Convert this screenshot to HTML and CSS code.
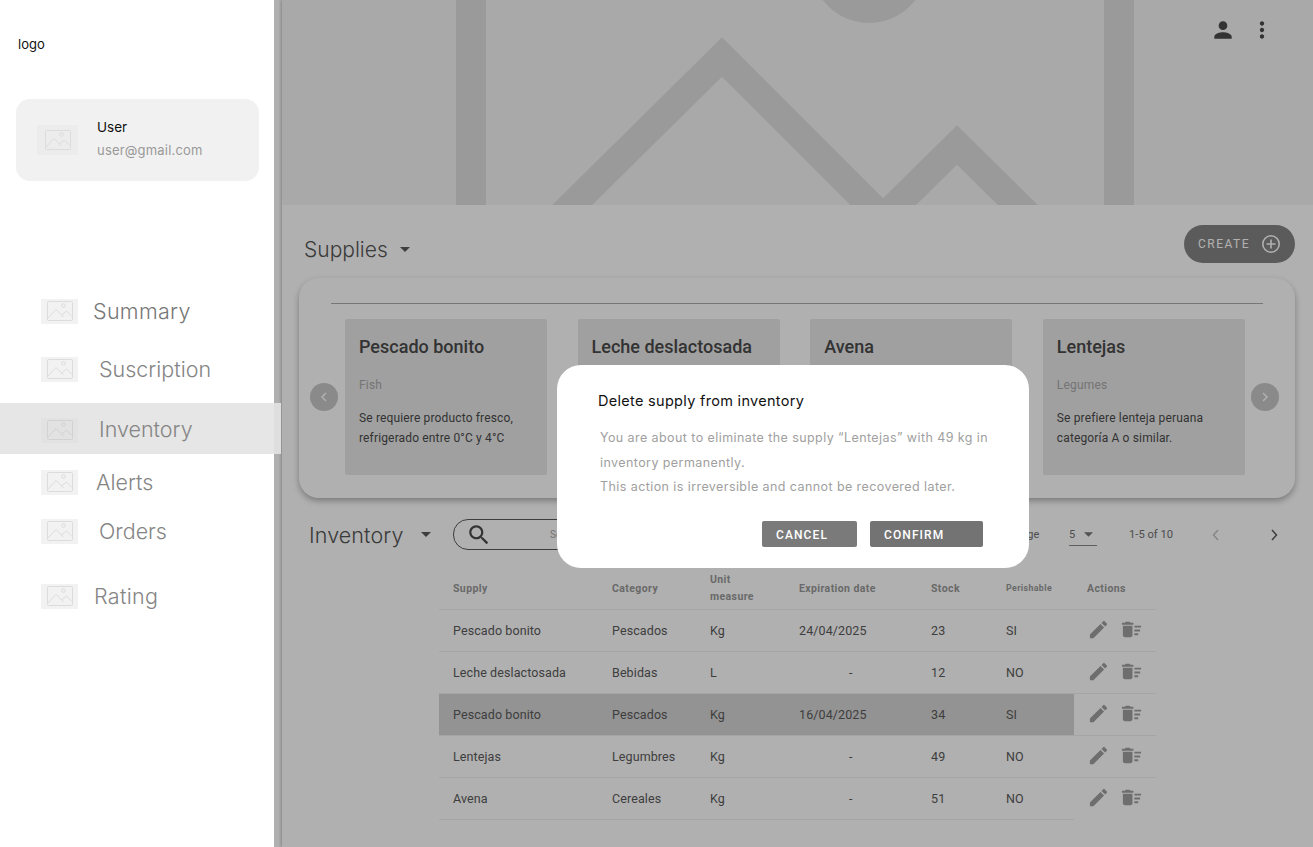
FILE: index.html
```html
<!DOCTYPE html>
<html lang="en">
<head>
  <meta charset="UTF-8" />
  <meta name="viewport" content="width=device-width, initial-scale=1.0" />
  <title>Inventory</title>
  <link rel="stylesheet" href="styles.css">
</head>
<body>
  <svg class="sprites" width="0" height="0">
    <symbol id="i-image" viewBox="0 0 28 22">
      <rect x="1.5" y="1.5" width="25" height="19" rx="1" fill="none" stroke="currentColor" stroke-width="1"/>
      <circle cx="17.5" cy="5.5" r="1.8" fill="none" stroke="currentColor" stroke-width="1"/>
      <path d="M2 18 L10 9.5 L17.5 17 M15.5 15 L20.5 11 L26 16.5" fill="none" stroke="currentColor" stroke-width="1"/>
    </symbol>
    <symbol id="i-edit" viewBox="0 0 24 24">
      <path d="M3 17.25V21h3.75L17.81 9.94l-3.75-3.75L3 17.25zM20.71 7.04c.39-.39.39-1.02 0-1.41l-2.34-2.34c-.39-.39-1.02-.39-1.41 0l-1.83 1.83 3.75 3.75 1.83-1.83z"/>
    </symbol>
    <symbol id="i-sweep" viewBox="0 0 24 24">
      <path d="M15 16h4v2h-4zm0-8h7v2h-7zm0 4h6v2h-6zM3 18c0 1.1.9 2 2 2h6c1.1 0 2-.9 2-2V8H3v10zM14 5h-3l-1-1H6L5 5H2v2h12z"/>
    </symbol>
    <symbol id="i-caret" viewBox="0 0 10 5">
      <path d="M0 0h10L5 5z"/>
    </symbol>
  </svg>

  <div class="app">
    <aside class="sidebar">
      <div class="logo">logo</div>
      <div class="user-card">
        <span class="thumb thumb-user"><svg class="thumb-icon"><use href="#i-image"/></svg></span>
        <div class="user-text">
          <div class="user-name">User</div>
          <div class="user-mail">user@gmail.com</div>
        </div>
      </div>
      <nav class="nav">
        <a class="nav-item nav-summary"><span class="thumb"><svg class="thumb-icon"><use href="#i-image"/></svg></span><span class="nav-label">Summary</span></a>
        <a class="nav-item nav-suscription"><span class="thumb"><svg class="thumb-icon"><use href="#i-image"/></svg></span><span class="nav-label">Suscription</span></a>
        <a class="nav-item nav-inventory"><span class="thumb"><svg class="thumb-icon"><use href="#i-image"/></svg></span><span class="nav-label">Inventory</span></a>
        <a class="nav-item nav-alerts"><span class="thumb"><svg class="thumb-icon"><use href="#i-image"/></svg></span><span class="nav-label">Alerts</span></a>
        <a class="nav-item nav-orders"><span class="thumb"><svg class="thumb-icon"><use href="#i-image"/></svg></span><span class="nav-label">Orders</span></a>
        <a class="nav-item nav-rating"><span class="thumb"><svg class="thumb-icon"><use href="#i-image"/></svg></span><span class="nav-label">Rating</span></a>
      </nav>
    </aside>

    <main class="main">
      <header class="hero">
        <svg class="hero-art" viewBox="0 0 1031 205" width="1031" height="205">
          <circle cx="587" cy="-35" r="58" fill="#dfdfdf"/>
          <path d="M189 -20V225M837 -20V225" stroke="#dfdfdf" stroke-width="30" fill="none"/>
          <path d="M268 227L440 57L601 218L675 145L758 227" stroke="#dfdfdf" stroke-width="28" fill="none"/>
        </svg>
        <div class="hero-actions">
          <svg class="hero-icon" viewBox="0 0 24 24"><path d="M12 12c2.21 0 4-1.79 4-4s-1.79-4-4-4-4 1.79-4 4 1.79 4 4 4zm0 2c-2.67 0-8 1.34-8 4v2h16v-2c0-2.66-5.33-4-8-4z"/></svg>
          <svg class="hero-icon" viewBox="0 0 24 24"><path d="M12 8c1.1 0 2-.9 2-2s-.9-2-2-2-2 .9-2 2 .9 2 2 2zm0 2c-1.1 0-2 .9-2 2s.9 2 2 2 2-.9 2-2-.9-2-2-2zm0 6c-1.1 0-2 .9-2 2s.9 2 2 2 2-.9 2-2-.9-2-2-2z"/></svg>
        </div>
      </header>

      <section class="supplies-head">
        <h2 class="section-title">Supplies</h2>
        <svg class="caret"><use href="#i-caret"/></svg>
        <button class="create-btn">CREATE
          <svg class="create-icon" viewBox="0 0 20 20"><circle cx="10" cy="10" r="8.2"/><path d="M10 5.5v9M5.5 10h9"/></svg>
        </button>
      </section>

      <section class="carousel">
        <div class="carousel-line"></div>
        <div class="carousel-row">
          <button class="arrow"><svg viewBox="0 0 10 14"><path d="M7 3L3 7l4 4"/></svg></button>
          <div class="cards">
            <article class="card">
              <h3>Pescado bonito</h3>
              <p class="card-cat">Fish</p>
              <p class="card-desc">Se requiere producto fresco, refrigerado entre 0°C y 4°C</p>
            </article>
            <article class="card">
              <h3>Leche deslactosada</h3>
            </article>
            <article class="card">
              <h3>Avena</h3>
            </article>
            <article class="card">
              <h3>Lentejas</h3>
              <p class="card-cat">Legumes</p>
              <p class="card-desc">Se prefiere lenteja peruana categoría A o similar.</p>
            </article>
          </div>
          <button class="arrow"><svg viewBox="0 0 10 14"><path d="M3 3l4 4-4 4"/></svg></button>
        </div>
      </section>

      <section class="inventory-bar">
        <div class="inventory-title">
          <h2 class="section-title">Inventory</h2>
          <svg class="caret"><use href="#i-caret"/></svg>
        </div>
        <div class="search">
          <svg class="search-icon" viewBox="0 0 24 24"><path d="M15.5 14h-.79l-.28-.27C15.41 12.59 16 11.11 16 9.5 16 5.91 13.09 3 9.5 3S3 5.91 3 9.5 5.91 16 9.5 16c1.61 0 3.09-.59 4.23-1.57l.27.28v.79l5 4.99L20.49 19l-4.99-5zm-6 0C7.01 14 5 11.99 5 9.5S7.01 5 9.5 5 14 7.01 14 9.5 11.99 14 9.5 14z"/></svg>
          <span class="search-text">Search</span>
        </div>
        <div class="pager">
          <span class="pager-label">Rows per page</span>
          <span class="pager-select">5<svg class="pager-caret"><use href="#i-caret"/></svg></span>
          <span class="pager-count">1-5 of 10</span>
          <svg class="pager-arrow pager-off" viewBox="0 0 10 14"><path d="M7 2L2.5 7 7 12"/></svg>
          <svg class="pager-arrow" viewBox="0 0 10 14"><path d="M3 2l4.5 5L3 12"/></svg>
        </div>
      </section>

      <table class="table">
        <colgroup>
          <col class="col-supply"><col class="col-cat"><col class="col-unit"><col class="col-exp"><col class="col-stock"><col class="col-per"><col class="col-act">
        </colgroup>
        <thead>
          <tr>
            <th>Supply</th>
            <th>Category</th>
            <th class="th-unit">Unit measure</th>
            <th>Expiration date</th>
            <th>Stock</th>
            <th class="th-small">Perishable</th>
            <th class="th-actions">Actions</th>
          </tr>
        </thead>
        <tbody>
          <tr>
            <td>Pescado bonito</td><td>Pescados</td><td>Kg</td><td>24/04/2025</td><td>23</td><td>SI</td>
            <td class="actions"><svg class="act-icon"><use href="#i-edit"/></svg><svg class="act-icon"><use href="#i-sweep"/></svg></td>
          </tr>
          <tr>
            <td>Leche deslactosada</td><td>Bebidas</td><td>L</td><td class="no-date">-</td><td>12</td><td>NO</td>
            <td class="actions"><svg class="act-icon"><use href="#i-edit"/></svg><svg class="act-icon"><use href="#i-sweep"/></svg></td>
          </tr>
          <tr class="selected">
            <td>Pescado bonito</td><td>Pescados</td><td>Kg</td><td>16/04/2025</td><td>34</td><td>SI</td>
            <td class="actions"><svg class="act-icon"><use href="#i-edit"/></svg><svg class="act-icon"><use href="#i-sweep"/></svg></td>
          </tr>
          <tr>
            <td>Lentejas</td><td>Legumbres</td><td>Kg</td><td class="no-date">-</td><td>49</td><td>NO</td>
            <td class="actions"><svg class="act-icon"><use href="#i-edit"/></svg><svg class="act-icon"><use href="#i-sweep"/></svg></td>
          </tr>
          <tr class="last">
            <td>Avena</td><td>Cereales</td><td>Kg</td><td class="no-date">-</td><td>51</td><td>NO</td>
            <td class="actions"><svg class="act-icon"><use href="#i-edit"/></svg><svg class="act-icon"><use href="#i-sweep"/></svg></td>
          </tr>
        </tbody>
      </table>
    </main>

    <div class="overlay">
      <div class="modal">
        <h4 class="modal-title">Delete supply from inventory</h4>
        <p class="modal-text">You are about to eliminate the supply “Lentejas” with 49 kg in inventory permanently.<br>This action is irreversible and cannot be recovered later.</p>
        <div class="modal-actions">
          <button class="modal-btn btn-cancel">CANCEL</button>
          <button class="modal-btn btn-confirm">CONFIRM</button>
        </div>
      </div>
    </div>
  </div>
</body>
</html>
```

FILE: styles.css
```css
* {
  box-sizing: border-box;
}
body {
  margin: 0;
  background: #fff;
  font-family: "Roboto", sans-serif;
  overflow: hidden;
}
h2, h3, h4, p {
  margin: 0;
  font-weight: normal;
}
button {
  border: none;
  font-family: inherit;
  padding: 0;
}
.sprites {
  display: block;
  height: 0;
}
.app {
  position: relative;
  display: flex;
  width: 1313px;
  height: 847px;
  overflow: hidden;
}

/* sidebar */
.sidebar {
  position: relative;
  z-index: 2;
  flex: 0 0 274px;
  width: 274px;
  min-width: 0;
  background: #fff;
  font-family: "Inter", sans-serif;
}
.logo {
  padding: 36px 0 0 18px;
  height: 99px;
  font-size: 13px;
  line-height: 16px;
  color: #111;
}
.user-card {
  display: flex;
  align-items: center;
  gap: 19px;
  margin-left: 16px;
  width: 243px;
  height: 82px;
  padding-left: 21px;
  background: #f1f1f1;
  border-radius: 14px;
}
.user-text {
  padding-bottom: 4px;
}
.user-name {
  font-size: 13.5px;
  line-height: 18px;
  color: #111;
}
.user-mail {
  margin-top: 5px;
  font-size: 13px;
  line-height: 18px;
  letter-spacing: 0.2px;
  color: #999;
}
.thumb {
  flex: 0 0 37px;
  width: 37px;
  height: 25px;
  display: flex;
  align-items: center;
  justify-content: center;
  background: #f2f2f2;
  color: #dcdcdc;
}
.thumb-user {
  flex-basis: 41px;
  width: 41px;
  height: 30px;
  background: #ececec;
}
.thumb-icon {
  width: 28px;
  height: 22px;
}
.nav {
  padding-top: 110px;
}
.nav-item {
  position: relative;
  display: flex;
  align-items: center;
  height: 40px;
  width: 274px;
  padding-left: 41px;
  font-size: 21.5px;
  font-weight: 300;
  color: #858585;
}
.nav-suscription { margin-top: 18px; }
.nav-suscription .nav-label { margin-left: 21px; }
.nav-summary .nav-label { margin-left: 15px; color: #777; letter-spacing: 0.3px; }
.nav-inventory {
  margin-top: 14px;
  height: 51px;
  width: 281px;
  background: #e6e6e6;
}
.nav-inventory::after {
  content: "";
  position: absolute;
  top: 0;
  right: 0;
  bottom: 0;
  width: 7px;
  background: #dedede;
}
.nav-inventory .thumb { margin-top: 3px; background: #e2e2e2; color: #d2d2d2; }
.nav-inventory .nav-label { margin-left: 21px; }
.nav-alerts { margin-top: 8px; }
.nav-alerts .nav-label { margin-left: 18px; }
.nav-orders { margin-top: 9px; }
.nav-orders .nav-label { margin-left: 21px; }
.nav-rating { margin-top: 25px; }
.nav-rating .nav-label { margin-left: 16px; letter-spacing: 0.3px; }

/* main area */
.main {
  flex: 1;
  margin-left: 8px;
  min-width: 0;
  background: #fff;
  box-shadow: -1px 0 3px rgba(0, 0, 0, 0.25);
}
.hero {
  position: relative;
  height: 205px;
  background: #f5f5f5;
  overflow: hidden;
}
.hero-art {
  position: absolute;
  top: 0;
  left: 0;
}
.hero-actions {
  position: absolute;
  top: 17px;
  right: 38px;
  display: flex;
  gap: 13px;
}
.hero-icon {
  width: 26px;
  height: 26px;
  fill: #4a4a4a;
}
.supplies-head {
  display: flex;
  align-items: center;
  height: 38px;
  margin-top: 20px;
  padding: 0 18px 0 22px;
}
.supplies-head .section-title,
.supplies-head .caret {
  margin-top: 10px;
}
.section-title {
  font-family: "Inter", sans-serif;
  font-size: 21px;
  font-weight: 300;
  color: #555;
}
.caret {
  width: 10px;
  height: 5px;
  margin-left: 12px;
  fill: #5a5a5a;
}
.create-btn {
  display: flex;
  align-items: center;
  justify-content: space-between;
  margin-left: auto;
  width: 111px;
  height: 38px;
  padding: 0 14px;
  border-radius: 19px;
  background: #858585;
  color: #fff;
  font-size: 12px;
  font-weight: 400;
  letter-spacing: 1.5px;
}
.create-icon {
  width: 20px;
  height: 20px;
  fill: none;
  stroke: #fff;
  stroke-width: 1.6;
}
.carousel {
  margin: 15px 18px 0 17px;
  height: 220px;
  padding-top: 25px;
  background: #fff;
  border-radius: 20px;
  box-shadow: 0 3px 6px rgba(0, 0, 0, 0.3);
}
.carousel-line {
  height: 1px;
  margin: 0 32px;
  background: #adadad;
}
.carousel-row {
  display: flex;
  align-items: center;
  gap: 7px;
  margin-top: 15px;
  padding-left: 11px;
}
.arrow {
  flex: 0 0 28px;
  width: 28px;
  height: 28px;
  display: flex;
  align-items: center;
  justify-content: center;
  border-radius: 50%;
  background: #c8c8c8;
}
.arrow svg {
  width: 10px;
  height: 14px;
  fill: none;
  stroke: #fff;
  stroke-width: 1.5;
}
.cards {
  display: flex;
  gap: 30.6px;
  margin-right: -1px;
}
.card {
  width: 202px;
  height: 156px;
  padding: 18px 14px 0;
  background: #e8e8e8;
  border-radius: 2px;
  color: #4a4a4a;
}
.card h3 {
  font-size: 18px;
  line-height: 20px;
  font-weight: 500;
}
.card-cat {
  margin-top: 20px;
  font-size: 12px;
  line-height: 16px;
  letter-spacing: 0.2px;
  color: #a8a8a8;
}
.card-desc {
  margin-top: 16px;
  font-size: 12px;
  line-height: 19.5px;
  letter-spacing: 0.15px;
}

/* inventory */
.inventory-bar {
  display: flex;
  align-items: center;
  height: 31px;
  margin-top: 21px;
  padding-left: 27px;
}
.inventory-title {
  display: flex;
  align-items: center;
  flex: 0 0 144px;
}
.inventory-title .section-title {
  font-size: 21.5px;
  letter-spacing: 0.1px;
}
.inventory-title .caret {
  margin-left: 17px;
}
.search {
  display: flex;
  align-items: center;
  width: 400px;
  height: 31px;
  padding-left: 12px;
  border: 1px solid #5a5a5a;
  border-radius: 15px;
}
.search-icon {
  width: 26px;
  height: 26px;
  fill: #4a4a4a;
}
.search-text {
  margin-left: 58px;
  font-size: 10px;
  color: #a8a8a8;
}
.pager {
  display: flex;
  align-items: center;
  margin-left: 114px;
  font-size: 11px;
  color: #707070;
}
.pager-label {
  width: 72px;
  white-space: nowrap;
  text-align: right;
}
.pager-select {
  display: flex;
  align-items: center;
  gap: 9px;
  width: 28px;
  height: 23px;
  margin-left: 30px;
  border-bottom: 1px solid #8a8a8a;
}
.pager-caret {
  width: 9px;
  height: 5px;
  fill: #777;
}
.pager-count {
  margin-left: 32px;
  width: 44px;
  white-space: nowrap;
  font-size: 11.2px;
}
.pager-arrow {
  width: 10px;
  height: 14px;
  fill: none;
  stroke: #5a5a5a;
  stroke-width: 1.5;
  margin-left: 38px;
}
.pager-arrow:last-child {
  margin-left: 48px;
}
.pager-off {
  stroke: #c4c4c4;
}
.table {
  width: 717px;
  margin: 20px 0 0 157px;
  border-collapse: collapse;
  table-layout: fixed;
}
.col-supply { width: 159px; }
.col-cat { width: 98px; }
.col-unit { width: 89px; }
.col-exp { width: 132px; }
.col-stock { width: 75px; }
.col-per { width: 82px; }
.col-act { width: 82px; }
.table th {
  height: 39px;
  padding: 0 0 2px 14px;
  text-align: left;
  font-size: 10.5px;
  font-weight: 700;
  letter-spacing: 0.4px;
  color: #999;
  border-bottom: 1px solid #efefef;
}
.table .th-unit {
  line-height: 17.5px;
  padding-right: 30px;
}
.table .th-small {
  font-size: 8.8px;
}
.table .th-actions {
  padding-left: 13px;
}
.table td {
  height: 42px;
  padding: 0 0 0 14px;
  font-size: 12.5px;
  letter-spacing: 0.1px;
  color: #5a5a5a;
  border-bottom: 1px solid #efefef;
}
.table td.no-date {
  padding-left: 64px;
}
.selected td {
  background: #d5d5d5;
}
.table .selected td.actions {
  background: #fff;
}
.last td.actions {
  border-bottom: none;
}
.actions {
  white-space: nowrap;
}
.table td.actions {
  padding-left: 13px;
}
.act-icon {
  width: 23px;
  height: 23px;
  margin-right: 10px;
  fill: #a0a0a0;
  vertical-align: middle;
  position: relative;
  top: -1px;
}

/* dialog */
.overlay {
  position: absolute;
  z-index: 1;
  top: 0;
  right: 0;
  bottom: 0;
  left: 274px;
  display: flex;
  justify-content: center;
  align-items: flex-start;
  padding: 365px 1px 0 0;
  background: rgba(0, 0, 0, 0.31);
}
.modal {
  width: 472px;
  height: 203px;
  padding: 27px 41px 0 41px;
  background: #fff;
  border-radius: 24px;
  font-family: "Inter", sans-serif;
}
.modal-title {
  font-size: 14.5px;
  line-height: 18px;
  letter-spacing: 0.3px;
  color: #111;
}
.modal-text {
  margin: 16px -12px 0 2px;
  font-size: 12.5px;
  line-height: 24.5px;
  letter-spacing: 0.42px;
  color: #a0a0a0;
}
.modal-actions {
  display: flex;
  justify-content: flex-end;
  gap: 13px;
  margin-top: 21px;
  padding-right: 5px;
}
.modal-btn {
  height: 26px;
  padding: 2px 0 0 14px;
  border-radius: 2px;
  text-align: left;
  font-family: "Roboto", sans-serif;
  font-size: 12px;
  font-weight: 500;
  letter-spacing: 1.1px;
  color: #fff;
}
.btn-cancel {
  width: 95px;
  background: #7a7a7a;
}
.btn-confirm {
  width: 113px;
  background: #737373;
}
```
